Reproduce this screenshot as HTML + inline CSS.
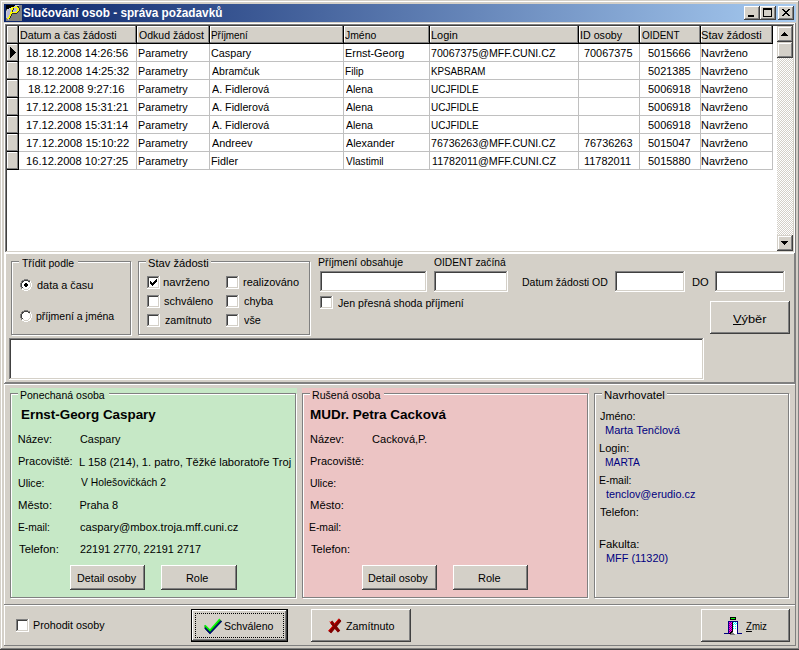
<!DOCTYPE html><html><head><meta charset="utf-8"><style>
html,body{margin:0;padding:0;width:799px;height:650px;overflow:hidden;background:#d4d0c8}
div,span,svg{position:absolute;box-sizing:border-box}
.t{white-space:pre;font-family:"Liberation Sans",sans-serif;line-height:13px}
u{text-decoration:underline;text-underline-offset:1px}
</style></head><body>
<div style="left:0px;top:0px;width:800px;height:650px;background:#d4d0c8;"></div>
<div style="left:1px;top:1px;width:798px;height:1px;background:#ffffff;"></div>
<div style="left:1px;top:1px;width:1px;height:648px;background:#ffffff;"></div>
<div style="left:798px;top:1px;width:1px;height:648px;background:#808080;"></div>
<div style="left:1px;top:648px;width:798px;height:1px;background:#808080;"></div>
<div style="left:0px;top:649px;width:800px;height:1px;background:#404040;"></div>
<div style="left:799px;top:0px;width:1px;height:650px;background:#404040;"></div>
<div style="left:4px;top:4px;width:792px;height:18px;background:linear-gradient(to right,#0a246a,#a6caf0);"></div>
<svg style="left:6px;top:5px" width="16" height="16" shape-rendering="crispEdges"><rect x="0" y="0" width="9" height="1" fill="#000"/><rect x="9" y="0" width="4" height="1" fill="#d0d0d0"/><rect x="13" y="0" width="3" height="1" fill="#808080"/><rect x="0" y="1" width="8" height="1" fill="#000"/><rect x="8" y="1" width="2" height="1" fill="#b8b8d8"/><rect x="10" y="1" width="1" height="1" fill="#ffff00"/><rect x="11" y="1" width="2" height="1" fill="#303030"/><rect x="13" y="1" width="3" height="1" fill="#808080"/><rect x="0" y="2" width="5" height="1" fill="#000"/><rect x="5" y="2" width="1" height="1" fill="#b8b8d8"/><rect x="6" y="2" width="6" height="1" fill="#ffff00"/><rect x="12" y="2" width="1" height="1" fill="#303030"/><rect x="13" y="2" width="3" height="1" fill="#808080"/><rect x="0" y="3" width="3" height="1" fill="#000"/><rect x="3" y="3" width="1" height="1" fill="#d0d0d0"/><rect x="4" y="3" width="3" height="1" fill="#ffff00"/><rect x="7" y="3" width="1" height="1" fill="#303030"/><rect x="8" y="3" width="3" height="1" fill="#b8b8d8"/><rect x="11" y="3" width="2" height="1" fill="#ffff00"/><rect x="13" y="3" width="1" height="1" fill="#303030"/><rect x="14" y="3" width="2" height="1" fill="#808080"/><rect x="0" y="4" width="1" height="1" fill="#303030"/><rect x="1" y="4" width="1" height="1" fill="#d0d0d0"/><rect x="2" y="4" width="3" height="1" fill="#b8b8d8"/><rect x="5" y="4" width="2" height="1" fill="#ffff00"/><rect x="7" y="4" width="1" height="1" fill="#303030"/><rect x="8" y="4" width="3" height="1" fill="#b8b8d8"/><rect x="11" y="4" width="2" height="1" fill="#ffff00"/><rect x="13" y="4" width="1" height="1" fill="#303030"/><rect x="14" y="4" width="2" height="1" fill="#808080"/><rect x="0" y="5" width="1" height="1" fill="#808080"/><rect x="1" y="5" width="1" height="1" fill="#d0d0d0"/><rect x="2" y="5" width="3" height="1" fill="#b8b8d8"/><rect x="5" y="5" width="1" height="1" fill="#ffff00"/><rect x="6" y="5" width="1" height="1" fill="#303030"/><rect x="7" y="5" width="4" height="1" fill="#b8b8d8"/><rect x="11" y="5" width="2" height="1" fill="#ffff00"/><rect x="13" y="5" width="1" height="1" fill="#303030"/><rect x="14" y="5" width="2" height="1" fill="#808080"/><rect x="0" y="6" width="1" height="1" fill="#d0d0d0"/><rect x="1" y="6" width="4" height="1" fill="#b8b8d8"/><rect x="5" y="6" width="1" height="1" fill="#ffff00"/><rect x="6" y="6" width="1" height="1" fill="#303030"/><rect x="7" y="6" width="3" height="1" fill="#b8b8d8"/><rect x="10" y="6" width="2" height="1" fill="#ffff00"/><rect x="12" y="6" width="1" height="1" fill="#303030"/><rect x="13" y="6" width="3" height="1" fill="#808080"/><rect x="0" y="7" width="1" height="1" fill="#d0d0d0"/><rect x="1" y="7" width="3" height="1" fill="#b8b8d8"/><rect x="4" y="7" width="7" height="1" fill="#ffff00"/><rect x="11" y="7" width="1" height="1" fill="#303030"/><rect x="12" y="7" width="4" height="1" fill="#808080"/><rect x="0" y="8" width="1" height="1" fill="#d0d0d0"/><rect x="1" y="8" width="3" height="1" fill="#b8b8d8"/><rect x="4" y="8" width="2" height="1" fill="#ffff00"/><rect x="6" y="8" width="5" height="1" fill="#303030"/><rect x="11" y="8" width="5" height="1" fill="#808080"/><rect x="0" y="9" width="1" height="1" fill="#d0d0d0"/><rect x="1" y="9" width="3" height="1" fill="#b8b8d8"/><rect x="4" y="9" width="1" height="1" fill="#ffff00"/><rect x="5" y="9" width="1" height="1" fill="#303030"/><rect x="6" y="9" width="10" height="1" fill="#808080"/><rect x="0" y="10" width="1" height="1" fill="#d0d0d0"/><rect x="1" y="10" width="2" height="1" fill="#b8b8d8"/><rect x="3" y="10" width="2" height="1" fill="#ffff00"/><rect x="5" y="10" width="1" height="1" fill="#303030"/><rect x="6" y="10" width="10" height="1" fill="#808080"/><rect x="0" y="11" width="1" height="1" fill="#d0d0d0"/><rect x="1" y="11" width="2" height="1" fill="#b8b8d8"/><rect x="3" y="11" width="1" height="1" fill="#ffff00"/><rect x="4" y="11" width="1" height="1" fill="#303030"/><rect x="5" y="11" width="11" height="1" fill="#808080"/><rect x="0" y="12" width="1" height="1" fill="#d0d0d0"/><rect x="1" y="12" width="1" height="1" fill="#b8b8d8"/><rect x="2" y="12" width="2" height="1" fill="#ffff00"/><rect x="4" y="12" width="1" height="1" fill="#303030"/><rect x="5" y="12" width="11" height="1" fill="#808080"/><rect x="0" y="13" width="1" height="1" fill="#808080"/><rect x="1" y="13" width="2" height="1" fill="#ffff00"/><rect x="3" y="13" width="1" height="1" fill="#303030"/><rect x="4" y="13" width="12" height="1" fill="#808080"/><rect x="0" y="14" width="2" height="1" fill="#808080"/><rect x="2" y="14" width="1" height="1" fill="#b8b8d8"/><rect x="3" y="14" width="13" height="1" fill="#808080"/><rect x="0" y="15" width="16" height="1" fill="#808080"/></svg>
<span class="t" style="left:23.02px;top:7px;font-size:12px;font-weight:bold;color:#fff;transform:scaleX(0.9802);transform-origin:0 0;">Slučování osob - správa požadavků</span>
<div style="left:744px;top:6px;width:16px;height:14px;background:#d4d0c8;"></div>
<div style="left:744px;top:6px;width:15px;height:1px;background:#ffffff;"></div>
<div style="left:744px;top:6px;width:1px;height:13px;background:#ffffff;"></div>
<div style="left:744px;top:19px;width:16px;height:1px;background:#404040;"></div>
<div style="left:759px;top:6px;width:1px;height:14px;background:#404040;"></div>
<div style="left:745px;top:7px;width:13px;height:1px;background:#d4d0c8;"></div>
<div style="left:745px;top:7px;width:1px;height:11px;background:#d4d0c8;"></div>
<div style="left:745px;top:18px;width:14px;height:1px;background:#808080;"></div>
<div style="left:758px;top:7px;width:1px;height:12px;background:#808080;"></div>
<div style="left:760px;top:6px;width:16px;height:14px;background:#d4d0c8;"></div>
<div style="left:760px;top:6px;width:15px;height:1px;background:#ffffff;"></div>
<div style="left:760px;top:6px;width:1px;height:13px;background:#ffffff;"></div>
<div style="left:760px;top:19px;width:16px;height:1px;background:#404040;"></div>
<div style="left:775px;top:6px;width:1px;height:14px;background:#404040;"></div>
<div style="left:761px;top:7px;width:13px;height:1px;background:#d4d0c8;"></div>
<div style="left:761px;top:7px;width:1px;height:11px;background:#d4d0c8;"></div>
<div style="left:761px;top:18px;width:14px;height:1px;background:#808080;"></div>
<div style="left:774px;top:7px;width:1px;height:12px;background:#808080;"></div>
<div style="left:778px;top:6px;width:16px;height:14px;background:#d4d0c8;"></div>
<div style="left:778px;top:6px;width:15px;height:1px;background:#ffffff;"></div>
<div style="left:778px;top:6px;width:1px;height:13px;background:#ffffff;"></div>
<div style="left:778px;top:19px;width:16px;height:1px;background:#404040;"></div>
<div style="left:793px;top:6px;width:1px;height:14px;background:#404040;"></div>
<div style="left:779px;top:7px;width:13px;height:1px;background:#d4d0c8;"></div>
<div style="left:779px;top:7px;width:1px;height:11px;background:#d4d0c8;"></div>
<div style="left:779px;top:18px;width:14px;height:1px;background:#808080;"></div>
<div style="left:792px;top:7px;width:1px;height:12px;background:#808080;"></div>
<div style="left:748px;top:15px;width:6px;height:2px;background:#000;"></div>
<div style="left:763px;top:8px;width:9px;height:2px;background:#000;"></div>
<div style="left:763px;top:8px;width:1px;height:9px;background:#000;"></div>
<div style="left:771px;top:8px;width:1px;height:9px;background:#000;"></div>
<div style="left:763px;top:16px;width:9px;height:1px;background:#000;"></div>
<svg style="left:782px;top:9px" width="8" height="7" shape-rendering="crispEdges"><path d="M0 0h2v1h1v1h2v-1h1v-1h2v1h-1v1h-1v1h-1v1h1v1h1v1h1v1h-2v-1h-1v-1h-2v1h-1v1h-2v-1h1v-1h1v-1h1v-1h-1v-1h-1v-1h-1z" fill="#000"/></svg>
<div style="left:4px;top:23px;width:792px;height:361px;background:#d4d0c8;"></div>
<div style="left:4px;top:23px;width:791px;height:1px;background:#ffffff;"></div>
<div style="left:4px;top:23px;width:1px;height:360px;background:#ffffff;"></div>
<div style="left:4px;top:383px;width:792px;height:1px;background:#808080;"></div>
<div style="left:795px;top:23px;width:1px;height:361px;background:#808080;"></div>
<div style="left:5px;top:24px;width:790px;height:229px;background:#fff;"></div>
<div style="left:5px;top:24px;width:789px;height:1px;background:#808080;"></div>
<div style="left:5px;top:24px;width:1px;height:228px;background:#808080;"></div>
<div style="left:5px;top:252px;width:790px;height:1px;background:#ffffff;"></div>
<div style="left:794px;top:24px;width:1px;height:229px;background:#ffffff;"></div>
<div style="left:6px;top:25px;width:787px;height:1px;background:#404040;"></div>
<div style="left:6px;top:25px;width:1px;height:226px;background:#404040;"></div>
<div style="left:6px;top:251px;width:788px;height:1px;background:#d4d0c8;"></div>
<div style="left:793px;top:25px;width:1px;height:227px;background:#d4d0c8;"></div>
<div style="left:7px;top:43px;width:766px;height:1px;background:#000;"></div>
<div style="left:18px;top:26px;width:1px;height:18px;background:#000;"></div>
<div style="left:7px;top:26px;width:11px;height:17px;background:#d4d0c8;"></div>
<div style="left:7px;top:26px;width:10px;height:1px;background:#ffffff;"></div>
<div style="left:7px;top:26px;width:1px;height:16px;background:#ffffff;"></div>
<div style="left:7px;top:42px;width:11px;height:1px;background:#808080;"></div>
<div style="left:17px;top:26px;width:1px;height:17px;background:#808080;"></div>
<div style="left:136px;top:26px;width:1px;height:18px;background:#000;"></div>
<div style="left:19px;top:26px;width:117px;height:17px;background:#d4d0c8;"></div>
<div style="left:19px;top:26px;width:116px;height:1px;background:#ffffff;"></div>
<div style="left:19px;top:26px;width:1px;height:16px;background:#ffffff;"></div>
<div style="left:19px;top:42px;width:117px;height:1px;background:#808080;"></div>
<div style="left:135px;top:26px;width:1px;height:17px;background:#808080;"></div>
<span class="t" style="left:20.03px;top:29px;font-size:11px;font-weight:normal;color:#000;transform:scaleX(0.9694);transform-origin:0 0;">Datum a čas žádosti</span>
<div style="left:209px;top:26px;width:1px;height:18px;background:#000;"></div>
<div style="left:137px;top:26px;width:72px;height:17px;background:#d4d0c8;"></div>
<div style="left:137px;top:26px;width:71px;height:1px;background:#ffffff;"></div>
<div style="left:137px;top:26px;width:1px;height:16px;background:#ffffff;"></div>
<div style="left:137px;top:42px;width:72px;height:1px;background:#808080;"></div>
<div style="left:208px;top:26px;width:1px;height:17px;background:#808080;"></div>
<span class="t" style="left:138.75px;top:29px;font-size:11px;font-weight:normal;color:#000;transform:scaleX(0.9559);transform-origin:0 0;">Odkud žádost</span>
<div style="left:343px;top:26px;width:1px;height:18px;background:#000;"></div>
<div style="left:210px;top:26px;width:133px;height:17px;background:#d4d0c8;"></div>
<div style="left:210px;top:26px;width:132px;height:1px;background:#ffffff;"></div>
<div style="left:210px;top:26px;width:1px;height:16px;background:#ffffff;"></div>
<div style="left:210px;top:42px;width:133px;height:1px;background:#808080;"></div>
<div style="left:342px;top:26px;width:1px;height:17px;background:#808080;"></div>
<span class="t" style="left:211.10px;top:29px;font-size:11px;font-weight:normal;color:#000;transform:scaleX(0.9000);transform-origin:0 0;">Příjmení</span>
<div style="left:429px;top:26px;width:1px;height:18px;background:#000;"></div>
<div style="left:344px;top:26px;width:85px;height:17px;background:#d4d0c8;"></div>
<div style="left:344px;top:26px;width:84px;height:1px;background:#ffffff;"></div>
<div style="left:344px;top:26px;width:1px;height:16px;background:#ffffff;"></div>
<div style="left:344px;top:42px;width:85px;height:1px;background:#808080;"></div>
<div style="left:428px;top:26px;width:1px;height:17px;background:#808080;"></div>
<span class="t" style="left:345.40px;top:29px;font-size:11px;font-weight:normal;color:#000;transform:scaleX(0.9455);transform-origin:0 0;">Jméno</span>
<div style="left:578px;top:26px;width:1px;height:18px;background:#000;"></div>
<div style="left:430px;top:26px;width:148px;height:17px;background:#d4d0c8;"></div>
<div style="left:430px;top:26px;width:147px;height:1px;background:#ffffff;"></div>
<div style="left:430px;top:26px;width:1px;height:16px;background:#ffffff;"></div>
<div style="left:430px;top:42px;width:148px;height:1px;background:#808080;"></div>
<div style="left:577px;top:26px;width:1px;height:17px;background:#808080;"></div>
<span class="t" style="left:430.60px;top:29px;font-size:11px;font-weight:normal;color:#000;transform:scaleX(0.9960);transform-origin:0 0;">Login</span>
<div style="left:639px;top:26px;width:1px;height:18px;background:#000;"></div>
<div style="left:579px;top:26px;width:60px;height:17px;background:#d4d0c8;"></div>
<div style="left:579px;top:26px;width:59px;height:1px;background:#ffffff;"></div>
<div style="left:579px;top:26px;width:1px;height:16px;background:#ffffff;"></div>
<div style="left:579px;top:42px;width:60px;height:1px;background:#808080;"></div>
<div style="left:638px;top:26px;width:1px;height:17px;background:#808080;"></div>
<span class="t" style="left:580.03px;top:29px;font-size:11px;font-weight:normal;color:#000;transform:scaleX(0.9709);transform-origin:0 0;">ID osoby</span>
<div style="left:700px;top:26px;width:1px;height:18px;background:#000;"></div>
<div style="left:640px;top:26px;width:60px;height:17px;background:#d4d0c8;"></div>
<div style="left:640px;top:26px;width:59px;height:1px;background:#ffffff;"></div>
<div style="left:640px;top:26px;width:1px;height:16px;background:#ffffff;"></div>
<div style="left:640px;top:42px;width:60px;height:1px;background:#808080;"></div>
<div style="left:699px;top:26px;width:1px;height:17px;background:#808080;"></div>
<span class="t" style="left:641.50px;top:29px;font-size:11px;font-weight:normal;color:#000;transform:scaleX(0.9024);transform-origin:0 0;">OIDENT</span>
<div style="left:772px;top:26px;width:1px;height:18px;background:#000;"></div>
<div style="left:701px;top:26px;width:71px;height:17px;background:#d4d0c8;"></div>
<div style="left:701px;top:26px;width:70px;height:1px;background:#ffffff;"></div>
<div style="left:701px;top:26px;width:1px;height:16px;background:#ffffff;"></div>
<div style="left:701px;top:42px;width:71px;height:1px;background:#808080;"></div>
<div style="left:771px;top:26px;width:1px;height:17px;background:#808080;"></div>
<span class="t" style="left:701.24px;top:29px;font-size:11px;font-weight:normal;color:#000;transform:scaleX(1.0129);transform-origin:0 0;">Stav žádosti</span>
<div style="left:7px;top:44px;width:11px;height:17px;background:#d4d0c8;"></div>
<div style="left:7px;top:44px;width:10px;height:1px;background:#ffffff;"></div>
<div style="left:7px;top:44px;width:1px;height:16px;background:#ffffff;"></div>
<div style="left:7px;top:60px;width:11px;height:1px;background:#808080;"></div>
<div style="left:17px;top:44px;width:1px;height:17px;background:#808080;"></div>
<div style="left:18px;top:44px;width:1px;height:18px;background:#000;"></div>
<div style="left:7px;top:61px;width:12px;height:1px;background:#000;"></div>
<div style="left:19px;top:61px;width:754px;height:1px;background:#c0c0c0;"></div>
<div style="left:136px;top:44px;width:1px;height:18px;background:#c0c0c0;"></div>
<div style="left:209px;top:44px;width:1px;height:18px;background:#c0c0c0;"></div>
<div style="left:343px;top:44px;width:1px;height:18px;background:#c0c0c0;"></div>
<div style="left:429px;top:44px;width:1px;height:18px;background:#c0c0c0;"></div>
<div style="left:578px;top:44px;width:1px;height:18px;background:#c0c0c0;"></div>
<div style="left:639px;top:44px;width:1px;height:18px;background:#c0c0c0;"></div>
<div style="left:700px;top:44px;width:1px;height:18px;background:#c0c0c0;"></div>
<div style="left:772px;top:44px;width:1px;height:18px;background:#c0c0c0;"></div>
<span class="t" style="left:25.74px;top:47px;font-size:11px;font-weight:normal;color:#000;transform:scaleX(1.0125);transform-origin:0 0;">18.12.2008 14:26:56</span>
<span class="t" style="left:137.52px;top:47px;font-size:11px;font-weight:normal;color:#000;transform:scaleX(0.9800);transform-origin:0 0;">Parametry</span>
<span class="t" style="left:210.77px;top:47px;font-size:11px;font-weight:normal;color:#000;transform:scaleX(0.9812);transform-origin:0 0;">Caspary</span>
<span class="t" style="left:344.51px;top:47px;font-size:11px;font-weight:normal;color:#000;transform:scaleX(0.9914);transform-origin:0 0;">Ernst-Georg</span>
<span class="t" style="left:430.79px;top:47px;font-size:11px;font-weight:normal;color:#000;transform:scaleX(0.9629);transform-origin:0 0;">70067375@MFF.CUNI.CZ</span>
<span class="t" style="left:583.76px;top:47px;font-size:11px;font-weight:normal;color:#000;transform:scaleX(0.9896);transform-origin:0 0;">70067375</span>
<span class="t" style="left:647.51px;top:47px;font-size:11px;font-weight:normal;color:#000;transform:scaleX(0.9940);transform-origin:0 0;">5015666</span>
<span class="t" style="left:701.26px;top:47px;font-size:11px;font-weight:normal;color:#000;transform:scaleX(0.9946);transform-origin:0 0;">Navrženo</span>
<div style="left:7px;top:62px;width:11px;height:17px;background:#d4d0c8;"></div>
<div style="left:7px;top:62px;width:10px;height:1px;background:#ffffff;"></div>
<div style="left:7px;top:62px;width:1px;height:16px;background:#ffffff;"></div>
<div style="left:7px;top:78px;width:11px;height:1px;background:#808080;"></div>
<div style="left:17px;top:62px;width:1px;height:17px;background:#808080;"></div>
<div style="left:18px;top:62px;width:1px;height:18px;background:#000;"></div>
<div style="left:7px;top:79px;width:12px;height:1px;background:#000;"></div>
<div style="left:19px;top:79px;width:754px;height:1px;background:#c0c0c0;"></div>
<div style="left:136px;top:62px;width:1px;height:18px;background:#c0c0c0;"></div>
<div style="left:209px;top:62px;width:1px;height:18px;background:#c0c0c0;"></div>
<div style="left:343px;top:62px;width:1px;height:18px;background:#c0c0c0;"></div>
<div style="left:429px;top:62px;width:1px;height:18px;background:#c0c0c0;"></div>
<div style="left:578px;top:62px;width:1px;height:18px;background:#c0c0c0;"></div>
<div style="left:639px;top:62px;width:1px;height:18px;background:#c0c0c0;"></div>
<div style="left:700px;top:62px;width:1px;height:18px;background:#c0c0c0;"></div>
<div style="left:772px;top:62px;width:1px;height:18px;background:#c0c0c0;"></div>
<span class="t" style="left:25.73px;top:65px;font-size:11px;font-weight:normal;color:#000;transform:scaleX(1.0227);transform-origin:0 0;">18.12.2008 14:25:32</span>
<span class="t" style="left:137.52px;top:65px;font-size:11px;font-weight:normal;color:#000;transform:scaleX(0.9800);transform-origin:0 0;">Parametry</span>
<span class="t" style="left:211.75px;top:65px;font-size:11px;font-weight:normal;color:#000;transform:scaleX(0.9592);transform-origin:0 0;">Abramčuk</span>
<span class="t" style="left:344.58px;top:65px;font-size:11px;font-weight:normal;color:#000;transform:scaleX(0.9211);transform-origin:0 0;">Filip</span>
<span class="t" style="left:430.86px;top:65px;font-size:11px;font-weight:normal;color:#000;transform:scaleX(0.8898);transform-origin:0 0;">KPSABRAM</span>
<span class="t" style="left:647.51px;top:65px;font-size:11px;font-weight:normal;color:#000;transform:scaleX(0.9940);transform-origin:0 0;">5021385</span>
<span class="t" style="left:701.26px;top:65px;font-size:11px;font-weight:normal;color:#000;transform:scaleX(0.9946);transform-origin:0 0;">Navrženo</span>
<div style="left:7px;top:80px;width:11px;height:17px;background:#d4d0c8;"></div>
<div style="left:7px;top:80px;width:10px;height:1px;background:#ffffff;"></div>
<div style="left:7px;top:80px;width:1px;height:16px;background:#ffffff;"></div>
<div style="left:7px;top:96px;width:11px;height:1px;background:#808080;"></div>
<div style="left:17px;top:80px;width:1px;height:17px;background:#808080;"></div>
<div style="left:18px;top:80px;width:1px;height:18px;background:#000;"></div>
<div style="left:7px;top:97px;width:12px;height:1px;background:#000;"></div>
<div style="left:19px;top:97px;width:754px;height:1px;background:#c0c0c0;"></div>
<div style="left:136px;top:80px;width:1px;height:18px;background:#c0c0c0;"></div>
<div style="left:209px;top:80px;width:1px;height:18px;background:#c0c0c0;"></div>
<div style="left:343px;top:80px;width:1px;height:18px;background:#c0c0c0;"></div>
<div style="left:429px;top:80px;width:1px;height:18px;background:#c0c0c0;"></div>
<div style="left:578px;top:80px;width:1px;height:18px;background:#c0c0c0;"></div>
<div style="left:639px;top:80px;width:1px;height:18px;background:#c0c0c0;"></div>
<div style="left:700px;top:80px;width:1px;height:18px;background:#c0c0c0;"></div>
<div style="left:772px;top:80px;width:1px;height:18px;background:#c0c0c0;"></div>
<span class="t" style="left:28.23px;top:83px;font-size:11px;font-weight:normal;color:#000;transform:scaleX(1.0186);transform-origin:0 0;">18.12.2008 9:27:16</span>
<span class="t" style="left:137.52px;top:83px;font-size:11px;font-weight:normal;color:#000;transform:scaleX(0.9800);transform-origin:0 0;">Parametry</span>
<span class="t" style="left:211.75px;top:83px;font-size:11px;font-weight:normal;color:#000;transform:scaleX(0.9746);transform-origin:0 0;">A. Fidlerová</span>
<span class="t" style="left:345.50px;top:83px;font-size:11px;font-weight:normal;color:#000;transform:scaleX(0.9554);transform-origin:0 0;">Alena</span>
<span class="t" style="left:430.84px;top:83px;font-size:11px;font-weight:normal;color:#000;transform:scaleX(0.9069);transform-origin:0 0;">UCJFIDLE</span>
<span class="t" style="left:647.51px;top:83px;font-size:11px;font-weight:normal;color:#000;transform:scaleX(0.9940);transform-origin:0 0;">5006918</span>
<span class="t" style="left:701.26px;top:83px;font-size:11px;font-weight:normal;color:#000;transform:scaleX(0.9946);transform-origin:0 0;">Navrženo</span>
<div style="left:7px;top:98px;width:11px;height:17px;background:#d4d0c8;"></div>
<div style="left:7px;top:98px;width:10px;height:1px;background:#ffffff;"></div>
<div style="left:7px;top:98px;width:1px;height:16px;background:#ffffff;"></div>
<div style="left:7px;top:114px;width:11px;height:1px;background:#808080;"></div>
<div style="left:17px;top:98px;width:1px;height:17px;background:#808080;"></div>
<div style="left:18px;top:98px;width:1px;height:18px;background:#000;"></div>
<div style="left:7px;top:115px;width:12px;height:1px;background:#000;"></div>
<div style="left:19px;top:115px;width:754px;height:1px;background:#c0c0c0;"></div>
<div style="left:136px;top:98px;width:1px;height:18px;background:#c0c0c0;"></div>
<div style="left:209px;top:98px;width:1px;height:18px;background:#c0c0c0;"></div>
<div style="left:343px;top:98px;width:1px;height:18px;background:#c0c0c0;"></div>
<div style="left:429px;top:98px;width:1px;height:18px;background:#c0c0c0;"></div>
<div style="left:578px;top:98px;width:1px;height:18px;background:#c0c0c0;"></div>
<div style="left:639px;top:98px;width:1px;height:18px;background:#c0c0c0;"></div>
<div style="left:700px;top:98px;width:1px;height:18px;background:#c0c0c0;"></div>
<div style="left:772px;top:98px;width:1px;height:18px;background:#c0c0c0;"></div>
<span class="t" style="left:25.73px;top:101px;font-size:11px;font-weight:normal;color:#000;transform:scaleX(1.0152);transform-origin:0 0;">17.12.2008 15:31:21</span>
<span class="t" style="left:137.52px;top:101px;font-size:11px;font-weight:normal;color:#000;transform:scaleX(0.9800);transform-origin:0 0;">Parametry</span>
<span class="t" style="left:211.75px;top:101px;font-size:11px;font-weight:normal;color:#000;transform:scaleX(0.9746);transform-origin:0 0;">A. Fidlerová</span>
<span class="t" style="left:345.50px;top:101px;font-size:11px;font-weight:normal;color:#000;transform:scaleX(0.9554);transform-origin:0 0;">Alena</span>
<span class="t" style="left:430.84px;top:101px;font-size:11px;font-weight:normal;color:#000;transform:scaleX(0.9069);transform-origin:0 0;">UCJFIDLE</span>
<span class="t" style="left:647.51px;top:101px;font-size:11px;font-weight:normal;color:#000;transform:scaleX(0.9940);transform-origin:0 0;">5006918</span>
<span class="t" style="left:701.26px;top:101px;font-size:11px;font-weight:normal;color:#000;transform:scaleX(0.9946);transform-origin:0 0;">Navrženo</span>
<div style="left:7px;top:116px;width:11px;height:17px;background:#d4d0c8;"></div>
<div style="left:7px;top:116px;width:10px;height:1px;background:#ffffff;"></div>
<div style="left:7px;top:116px;width:1px;height:16px;background:#ffffff;"></div>
<div style="left:7px;top:132px;width:11px;height:1px;background:#808080;"></div>
<div style="left:17px;top:116px;width:1px;height:17px;background:#808080;"></div>
<div style="left:18px;top:116px;width:1px;height:18px;background:#000;"></div>
<div style="left:7px;top:133px;width:12px;height:1px;background:#000;"></div>
<div style="left:19px;top:133px;width:754px;height:1px;background:#c0c0c0;"></div>
<div style="left:136px;top:116px;width:1px;height:18px;background:#c0c0c0;"></div>
<div style="left:209px;top:116px;width:1px;height:18px;background:#c0c0c0;"></div>
<div style="left:343px;top:116px;width:1px;height:18px;background:#c0c0c0;"></div>
<div style="left:429px;top:116px;width:1px;height:18px;background:#c0c0c0;"></div>
<div style="left:578px;top:116px;width:1px;height:18px;background:#c0c0c0;"></div>
<div style="left:639px;top:116px;width:1px;height:18px;background:#c0c0c0;"></div>
<div style="left:700px;top:116px;width:1px;height:18px;background:#c0c0c0;"></div>
<div style="left:772px;top:116px;width:1px;height:18px;background:#c0c0c0;"></div>
<span class="t" style="left:25.74px;top:119px;font-size:11px;font-weight:normal;color:#000;transform:scaleX(1.0125);transform-origin:0 0;">17.12.2008 15:31:14</span>
<span class="t" style="left:137.52px;top:119px;font-size:11px;font-weight:normal;color:#000;transform:scaleX(0.9800);transform-origin:0 0;">Parametry</span>
<span class="t" style="left:211.75px;top:119px;font-size:11px;font-weight:normal;color:#000;transform:scaleX(0.9746);transform-origin:0 0;">A. Fidlerová</span>
<span class="t" style="left:345.50px;top:119px;font-size:11px;font-weight:normal;color:#000;transform:scaleX(0.9554);transform-origin:0 0;">Alena</span>
<span class="t" style="left:430.84px;top:119px;font-size:11px;font-weight:normal;color:#000;transform:scaleX(0.9069);transform-origin:0 0;">UCJFIDLE</span>
<span class="t" style="left:647.51px;top:119px;font-size:11px;font-weight:normal;color:#000;transform:scaleX(0.9940);transform-origin:0 0;">5006918</span>
<span class="t" style="left:701.26px;top:119px;font-size:11px;font-weight:normal;color:#000;transform:scaleX(0.9946);transform-origin:0 0;">Navrženo</span>
<div style="left:7px;top:134px;width:11px;height:17px;background:#d4d0c8;"></div>
<div style="left:7px;top:134px;width:10px;height:1px;background:#ffffff;"></div>
<div style="left:7px;top:134px;width:1px;height:16px;background:#ffffff;"></div>
<div style="left:7px;top:150px;width:11px;height:1px;background:#808080;"></div>
<div style="left:17px;top:134px;width:1px;height:17px;background:#808080;"></div>
<div style="left:18px;top:134px;width:1px;height:18px;background:#000;"></div>
<div style="left:7px;top:151px;width:12px;height:1px;background:#000;"></div>
<div style="left:19px;top:151px;width:754px;height:1px;background:#c0c0c0;"></div>
<div style="left:136px;top:134px;width:1px;height:18px;background:#c0c0c0;"></div>
<div style="left:209px;top:134px;width:1px;height:18px;background:#c0c0c0;"></div>
<div style="left:343px;top:134px;width:1px;height:18px;background:#c0c0c0;"></div>
<div style="left:429px;top:134px;width:1px;height:18px;background:#c0c0c0;"></div>
<div style="left:578px;top:134px;width:1px;height:18px;background:#c0c0c0;"></div>
<div style="left:639px;top:134px;width:1px;height:18px;background:#c0c0c0;"></div>
<div style="left:700px;top:134px;width:1px;height:18px;background:#c0c0c0;"></div>
<div style="left:772px;top:134px;width:1px;height:18px;background:#c0c0c0;"></div>
<span class="t" style="left:25.73px;top:137px;font-size:11px;font-weight:normal;color:#000;transform:scaleX(1.0227);transform-origin:0 0;">17.12.2008 15:10:22</span>
<span class="t" style="left:137.52px;top:137px;font-size:11px;font-weight:normal;color:#000;transform:scaleX(0.9800);transform-origin:0 0;">Parametry</span>
<span class="t" style="left:211.75px;top:137px;font-size:11px;font-weight:normal;color:#000;transform:scaleX(0.9878);transform-origin:0 0;">Andreev</span>
<span class="t" style="left:345.50px;top:137px;font-size:11px;font-weight:normal;color:#000;transform:scaleX(0.9796);transform-origin:0 0;">Alexander</span>
<span class="t" style="left:430.79px;top:137px;font-size:11px;font-weight:normal;color:#000;transform:scaleX(0.9629);transform-origin:0 0;">76736263@MFF.CUNI.CZ</span>
<span class="t" style="left:583.76px;top:137px;font-size:11px;font-weight:normal;color:#000;transform:scaleX(0.9896);transform-origin:0 0;">76736263</span>
<span class="t" style="left:647.51px;top:137px;font-size:11px;font-weight:normal;color:#000;transform:scaleX(0.9940);transform-origin:0 0;">5015047</span>
<span class="t" style="left:701.26px;top:137px;font-size:11px;font-weight:normal;color:#000;transform:scaleX(0.9946);transform-origin:0 0;">Navrženo</span>
<div style="left:7px;top:152px;width:11px;height:17px;background:#d4d0c8;"></div>
<div style="left:7px;top:152px;width:10px;height:1px;background:#ffffff;"></div>
<div style="left:7px;top:152px;width:1px;height:16px;background:#ffffff;"></div>
<div style="left:7px;top:168px;width:11px;height:1px;background:#808080;"></div>
<div style="left:17px;top:152px;width:1px;height:17px;background:#808080;"></div>
<div style="left:18px;top:152px;width:1px;height:18px;background:#000;"></div>
<div style="left:7px;top:169px;width:12px;height:1px;background:#000;"></div>
<div style="left:19px;top:169px;width:754px;height:1px;background:#c0c0c0;"></div>
<div style="left:136px;top:152px;width:1px;height:18px;background:#c0c0c0;"></div>
<div style="left:209px;top:152px;width:1px;height:18px;background:#c0c0c0;"></div>
<div style="left:343px;top:152px;width:1px;height:18px;background:#c0c0c0;"></div>
<div style="left:429px;top:152px;width:1px;height:18px;background:#c0c0c0;"></div>
<div style="left:578px;top:152px;width:1px;height:18px;background:#c0c0c0;"></div>
<div style="left:639px;top:152px;width:1px;height:18px;background:#c0c0c0;"></div>
<div style="left:700px;top:152px;width:1px;height:18px;background:#c0c0c0;"></div>
<div style="left:772px;top:152px;width:1px;height:18px;background:#c0c0c0;"></div>
<span class="t" style="left:25.74px;top:155px;font-size:11px;font-weight:normal;color:#000;transform:scaleX(1.0125);transform-origin:0 0;">16.12.2008 10:27:25</span>
<span class="t" style="left:137.52px;top:155px;font-size:11px;font-weight:normal;color:#000;transform:scaleX(0.9800);transform-origin:0 0;">Parametry</span>
<span class="t" style="left:210.77px;top:155px;font-size:11px;font-weight:normal;color:#000;transform:scaleX(0.9808);transform-origin:0 0;">Fidler</span>
<span class="t" style="left:345.50px;top:155px;font-size:11px;font-weight:normal;color:#000;transform:scaleX(0.9187);transform-origin:0 0;">Vlastimil</span>
<span class="t" style="left:431.53px;top:155px;font-size:11px;font-weight:normal;color:#000;transform:scaleX(0.9722);transform-origin:0 0;">11782011@MFF.CUNI.CZ</span>
<span class="t" style="left:584.26px;top:155px;font-size:11px;font-weight:normal;color:#000;transform:scaleX(0.9946);transform-origin:0 0;">11782011</span>
<span class="t" style="left:647.51px;top:155px;font-size:11px;font-weight:normal;color:#000;transform:scaleX(0.9940);transform-origin:0 0;">5015880</span>
<span class="t" style="left:701.26px;top:155px;font-size:11px;font-weight:normal;color:#000;transform:scaleX(0.9946);transform-origin:0 0;">Navrženo</span>
<svg style="left:10px;top:47px" width="6" height="11" shape-rendering="crispEdges"><path d="M0 0h1v1h1v1h1v1h1v1h1v1h1v1h-1v1h-1v1h-1v1h-1v1h-1v1h-1z" fill="#000"/></svg>
<svg style="left:777px;top:42px" width="16" height="193" shape-rendering="crispEdges"><defs><pattern id="ck" width="2" height="2" patternUnits="userSpaceOnUse"><rect width="2" height="2" fill="#fff"/><rect width="1" height="1" fill="#d4d0c8"/><rect x="1" y="1" width="1" height="1" fill="#d4d0c8"/></pattern></defs><rect width="16" height="193" fill="url(#ck)"/></svg>
<div style="left:777px;top:26px;width:16px;height:16px;background:#d4d0c8;"></div>
<div style="left:777px;top:26px;width:15px;height:1px;background:#d4d0c8;"></div>
<div style="left:777px;top:26px;width:1px;height:15px;background:#d4d0c8;"></div>
<div style="left:777px;top:41px;width:16px;height:1px;background:#404040;"></div>
<div style="left:792px;top:26px;width:1px;height:16px;background:#404040;"></div>
<div style="left:778px;top:27px;width:13px;height:1px;background:#ffffff;"></div>
<div style="left:778px;top:27px;width:1px;height:13px;background:#ffffff;"></div>
<div style="left:778px;top:40px;width:14px;height:1px;background:#808080;"></div>
<div style="left:791px;top:27px;width:1px;height:14px;background:#808080;"></div>
<div style="left:777px;top:42px;width:16px;height:16px;background:#d4d0c8;"></div>
<div style="left:777px;top:42px;width:15px;height:1px;background:#d4d0c8;"></div>
<div style="left:777px;top:42px;width:1px;height:15px;background:#d4d0c8;"></div>
<div style="left:777px;top:57px;width:16px;height:1px;background:#404040;"></div>
<div style="left:792px;top:42px;width:1px;height:16px;background:#404040;"></div>
<div style="left:778px;top:43px;width:13px;height:1px;background:#ffffff;"></div>
<div style="left:778px;top:43px;width:1px;height:13px;background:#ffffff;"></div>
<div style="left:778px;top:56px;width:14px;height:1px;background:#808080;"></div>
<div style="left:791px;top:43px;width:1px;height:14px;background:#808080;"></div>
<div style="left:777px;top:235px;width:16px;height:16px;background:#d4d0c8;"></div>
<div style="left:777px;top:235px;width:15px;height:1px;background:#d4d0c8;"></div>
<div style="left:777px;top:235px;width:1px;height:15px;background:#d4d0c8;"></div>
<div style="left:777px;top:250px;width:16px;height:1px;background:#404040;"></div>
<div style="left:792px;top:235px;width:1px;height:16px;background:#404040;"></div>
<div style="left:778px;top:236px;width:13px;height:1px;background:#ffffff;"></div>
<div style="left:778px;top:236px;width:1px;height:13px;background:#ffffff;"></div>
<div style="left:778px;top:249px;width:14px;height:1px;background:#808080;"></div>
<div style="left:791px;top:236px;width:1px;height:14px;background:#808080;"></div>
<svg style="left:781px;top:32px" width="7" height="4" shape-rendering="crispEdges"><path d="M3 0h1v1h1v1h1v1h1v1h-7v-1h1v-1h1v-1h1z" fill="#000"/></svg>
<svg style="left:781px;top:241px" width="7" height="4" shape-rendering="crispEdges"><path d="M0 0h7v1h-1v1h-1v1h-1v1h-1v-1h-1v-1h-1v-1h-1z" fill="#000"/></svg>
<div style="left:5px;top:253px;width:790px;height:130px;background:#d4d0c8;"></div>
<div style="left:5px;top:253px;width:789px;height:1px;background:#ffffff;"></div>
<div style="left:5px;top:253px;width:1px;height:129px;background:#ffffff;"></div>
<div style="left:5px;top:382px;width:790px;height:1px;background:#808080;"></div>
<div style="left:794px;top:253px;width:1px;height:130px;background:#808080;"></div>
<div style="left:12px;top:262px;width:119px;height:1px;background:#ffffff;"></div>
<div style="left:12px;top:262px;width:1px;height:73px;background:#ffffff;"></div>
<div style="left:12px;top:335px;width:120px;height:1px;background:#ffffff;"></div>
<div style="left:131px;top:262px;width:1px;height:74px;background:#ffffff;"></div>
<div style="left:11px;top:261px;width:119px;height:1px;background:#808080;"></div>
<div style="left:11px;top:261px;width:1px;height:73px;background:#808080;"></div>
<div style="left:11px;top:334px;width:120px;height:1px;background:#808080;"></div>
<div style="left:130px;top:261px;width:1px;height:74px;background:#808080;"></div>
<div style="left:19px;top:261px;width:59px;height:2px;background:#d4d0c8;"></div>
<span class="t" style="left:22.00px;top:257px;font-size:11px;font-weight:normal;color:#000;transform:scaleX(0.9455);transform-origin:0 0;">Třídit podle</span>
<div style="left:139px;top:262px;width:171px;height:1px;background:#ffffff;"></div>
<div style="left:139px;top:262px;width:1px;height:73px;background:#ffffff;"></div>
<div style="left:139px;top:335px;width:172px;height:1px;background:#ffffff;"></div>
<div style="left:310px;top:262px;width:1px;height:74px;background:#ffffff;"></div>
<div style="left:138px;top:261px;width:171px;height:1px;background:#808080;"></div>
<div style="left:138px;top:261px;width:1px;height:73px;background:#808080;"></div>
<div style="left:138px;top:334px;width:172px;height:1px;background:#808080;"></div>
<div style="left:309px;top:261px;width:1px;height:74px;background:#808080;"></div>
<div style="left:146px;top:261px;width:65px;height:2px;background:#d4d0c8;"></div>
<span class="t" style="left:147.59px;top:257px;font-size:11px;font-weight:normal;color:#000;transform:scaleX(1.0138);transform-origin:0 0;">Stav žádosti</span>
<svg style="left:20px;top:279px" width="12" height="12" viewBox="0 0 12 12" shape-rendering="crispEdges">
<path d="M4 0h4v1h2v1h1v2h1v4h-1v2h-1v1h-2v1h-4v-1h-2v-1h-1v-2h-1v-4h1v-2h1v-1h2z" fill="#fff"/>
<path d="M4 0h4v1h-4zM2 1h2v1h-2zM8 1h2v1h-2zM1 2h1v2h-1zM0 4h1v4h-1zM1 8h1v2h-1z" fill="#808080"/>
<path d="M4 1h4v1h-4zM2 2h2v1h-2zM8 2h2v1h-2zM2 3h1v1h-1zM1 4h1v4h-1zM2 8h1v1h-1z" fill="#404040"/>
<path d="M10 2h1v2h-1zM11 4h1v4h-1zM10 8h1v2h-1zM8 10h2v1h-2zM4 11h4v1h-4zM2 10h2v1h-2z" fill="#fff"/>
<path d="M9 3h1v1h-1zM10 4h1v4h-1zM9 8h1v1h-1zM8 9h1v1h-1zM4 10h4v1h-4zM3 9h1v1h-1z" fill="#d4d0c8"/>
<path d="M5 4h2v1h1v2h-1v1h-2v-1h-1v-2h1z" fill="#000"/>
</svg>
<span class="t" style="left:37.00px;top:279px;font-size:11px;font-weight:normal;color:#000;transform:scaleX(0.9911);transform-origin:0 0;">data a času</span>
<svg style="left:20px;top:310px" width="12" height="12" viewBox="0 0 12 12" shape-rendering="crispEdges">
<path d="M4 0h4v1h2v1h1v2h1v4h-1v2h-1v1h-2v1h-4v-1h-2v-1h-1v-2h-1v-4h1v-2h1v-1h2z" fill="#fff"/>
<path d="M4 0h4v1h-4zM2 1h2v1h-2zM8 1h2v1h-2zM1 2h1v2h-1zM0 4h1v4h-1zM1 8h1v2h-1z" fill="#808080"/>
<path d="M4 1h4v1h-4zM2 2h2v1h-2zM8 2h2v1h-2zM2 3h1v1h-1zM1 4h1v4h-1zM2 8h1v1h-1z" fill="#404040"/>
<path d="M10 2h1v2h-1zM11 4h1v4h-1zM10 8h1v2h-1zM8 10h2v1h-2zM4 11h4v1h-4zM2 10h2v1h-2z" fill="#fff"/>
<path d="M9 3h1v1h-1zM10 4h1v4h-1zM9 8h1v1h-1zM8 9h1v1h-1zM4 10h4v1h-4zM3 9h1v1h-1z" fill="#d4d0c8"/>

</svg>
<span class="t" style="left:36.05px;top:310px;font-size:11px;font-weight:normal;color:#000;transform:scaleX(0.9543);transform-origin:0 0;">příjmení a jména</span>
<div style="left:147px;top:276px;width:13px;height:13px;background:#fff;"></div>
<div style="left:147px;top:276px;width:12px;height:1px;background:#808080;"></div>
<div style="left:147px;top:276px;width:1px;height:12px;background:#808080;"></div>
<div style="left:147px;top:288px;width:13px;height:1px;background:#ffffff;"></div>
<div style="left:159px;top:276px;width:1px;height:13px;background:#ffffff;"></div>
<div style="left:148px;top:277px;width:10px;height:1px;background:#404040;"></div>
<div style="left:148px;top:277px;width:1px;height:10px;background:#404040;"></div>
<div style="left:148px;top:287px;width:11px;height:1px;background:#d4d0c8;"></div>
<div style="left:158px;top:277px;width:1px;height:11px;background:#d4d0c8;"></div>
<svg style="left:150px;top:279px" width="7" height="7" shape-rendering="crispEdges"><path d="M0 2h1v1h1v1h1v-1h1v-1h1v-1h1v-1h1v3h-1v1h-1v1h-1v1h-1v1h-1v-1h-1v-1h-1v-1h-1z" fill="#000"/></svg>
<span class="t" style="left:163.47px;top:276px;font-size:11px;font-weight:normal;color:#000;transform:scaleX(1.0295);transform-origin:0 0;">navrženo</span>
<div style="left:147px;top:295px;width:13px;height:13px;background:#fff;"></div>
<div style="left:147px;top:295px;width:12px;height:1px;background:#808080;"></div>
<div style="left:147px;top:295px;width:1px;height:12px;background:#808080;"></div>
<div style="left:147px;top:307px;width:13px;height:1px;background:#ffffff;"></div>
<div style="left:159px;top:295px;width:1px;height:13px;background:#ffffff;"></div>
<div style="left:148px;top:296px;width:10px;height:1px;background:#404040;"></div>
<div style="left:148px;top:296px;width:1px;height:10px;background:#404040;"></div>
<div style="left:148px;top:306px;width:11px;height:1px;background:#d4d0c8;"></div>
<div style="left:158px;top:296px;width:1px;height:11px;background:#d4d0c8;"></div>
<span class="t" style="left:163.51px;top:295px;font-size:11px;font-weight:normal;color:#000;transform:scaleX(0.9917);transform-origin:0 0;">schváleno</span>
<div style="left:147px;top:314px;width:13px;height:13px;background:#fff;"></div>
<div style="left:147px;top:314px;width:12px;height:1px;background:#808080;"></div>
<div style="left:147px;top:314px;width:1px;height:12px;background:#808080;"></div>
<div style="left:147px;top:326px;width:13px;height:1px;background:#ffffff;"></div>
<div style="left:159px;top:314px;width:1px;height:13px;background:#ffffff;"></div>
<div style="left:148px;top:315px;width:10px;height:1px;background:#404040;"></div>
<div style="left:148px;top:315px;width:1px;height:10px;background:#404040;"></div>
<div style="left:148px;top:325px;width:11px;height:1px;background:#d4d0c8;"></div>
<div style="left:158px;top:315px;width:1px;height:11px;background:#d4d0c8;"></div>
<span class="t" style="left:164.50px;top:314px;font-size:11px;font-weight:normal;color:#000;transform:scaleX(0.9688);transform-origin:0 0;">zamítnuto</span>
<div style="left:226px;top:276px;width:13px;height:13px;background:#fff;"></div>
<div style="left:226px;top:276px;width:12px;height:1px;background:#808080;"></div>
<div style="left:226px;top:276px;width:1px;height:12px;background:#808080;"></div>
<div style="left:226px;top:288px;width:13px;height:1px;background:#ffffff;"></div>
<div style="left:238px;top:276px;width:1px;height:13px;background:#ffffff;"></div>
<div style="left:227px;top:277px;width:10px;height:1px;background:#404040;"></div>
<div style="left:227px;top:277px;width:1px;height:10px;background:#404040;"></div>
<div style="left:227px;top:287px;width:11px;height:1px;background:#d4d0c8;"></div>
<div style="left:237px;top:277px;width:1px;height:11px;background:#d4d0c8;"></div>
<span class="t" style="left:242.80px;top:276px;font-size:11px;font-weight:normal;color:#000;transform:scaleX(0.9964);transform-origin:0 0;">realizováno</span>
<div style="left:226px;top:295px;width:13px;height:13px;background:#fff;"></div>
<div style="left:226px;top:295px;width:12px;height:1px;background:#808080;"></div>
<div style="left:226px;top:295px;width:1px;height:12px;background:#808080;"></div>
<div style="left:226px;top:307px;width:13px;height:1px;background:#ffffff;"></div>
<div style="left:238px;top:295px;width:1px;height:13px;background:#ffffff;"></div>
<div style="left:227px;top:296px;width:10px;height:1px;background:#404040;"></div>
<div style="left:227px;top:296px;width:1px;height:10px;background:#404040;"></div>
<div style="left:227px;top:306px;width:11px;height:1px;background:#d4d0c8;"></div>
<div style="left:237px;top:296px;width:1px;height:11px;background:#d4d0c8;"></div>
<span class="t" style="left:243.80px;top:295px;font-size:11px;font-weight:normal;color:#000;transform:scaleX(0.9862);transform-origin:0 0;">chyba</span>
<div style="left:226px;top:314px;width:13px;height:13px;background:#fff;"></div>
<div style="left:226px;top:314px;width:12px;height:1px;background:#808080;"></div>
<div style="left:226px;top:314px;width:1px;height:12px;background:#808080;"></div>
<div style="left:226px;top:326px;width:13px;height:1px;background:#ffffff;"></div>
<div style="left:238px;top:314px;width:1px;height:13px;background:#ffffff;"></div>
<div style="left:227px;top:315px;width:10px;height:1px;background:#404040;"></div>
<div style="left:227px;top:315px;width:1px;height:10px;background:#404040;"></div>
<div style="left:227px;top:325px;width:11px;height:1px;background:#d4d0c8;"></div>
<div style="left:237px;top:315px;width:1px;height:11px;background:#d4d0c8;"></div>
<span class="t" style="left:243.80px;top:314px;font-size:11px;font-weight:normal;color:#000;transform:scaleX(0.9824);transform-origin:0 0;">vše</span>
<span class="t" style="left:318.44px;top:256px;font-size:11px;font-weight:normal;color:#000;transform:scaleX(0.9586);transform-origin:0 0;">Příjmení obsahuje</span>
<span class="t" style="left:433.60px;top:256px;font-size:11px;font-weight:normal;color:#000;transform:scaleX(0.9325);transform-origin:0 0;">OIDENT začíná</span>
<div style="left:320px;top:271px;width:107px;height:21px;background:#fff;"></div>
<div style="left:320px;top:271px;width:106px;height:1px;background:#808080;"></div>
<div style="left:320px;top:271px;width:1px;height:20px;background:#808080;"></div>
<div style="left:320px;top:291px;width:107px;height:1px;background:#ffffff;"></div>
<div style="left:426px;top:271px;width:1px;height:21px;background:#ffffff;"></div>
<div style="left:321px;top:272px;width:104px;height:1px;background:#404040;"></div>
<div style="left:321px;top:272px;width:1px;height:18px;background:#404040;"></div>
<div style="left:321px;top:290px;width:105px;height:1px;background:#d4d0c8;"></div>
<div style="left:425px;top:272px;width:1px;height:19px;background:#d4d0c8;"></div>
<div style="left:434px;top:271px;width:74px;height:21px;background:#fff;"></div>
<div style="left:434px;top:271px;width:73px;height:1px;background:#808080;"></div>
<div style="left:434px;top:271px;width:1px;height:20px;background:#808080;"></div>
<div style="left:434px;top:291px;width:74px;height:1px;background:#ffffff;"></div>
<div style="left:507px;top:271px;width:1px;height:21px;background:#ffffff;"></div>
<div style="left:435px;top:272px;width:71px;height:1px;background:#404040;"></div>
<div style="left:435px;top:272px;width:1px;height:18px;background:#404040;"></div>
<div style="left:435px;top:290px;width:72px;height:1px;background:#d4d0c8;"></div>
<div style="left:506px;top:272px;width:1px;height:19px;background:#d4d0c8;"></div>
<span class="t" style="left:522.04px;top:276px;font-size:11px;font-weight:normal;color:#000;transform:scaleX(0.9551);transform-origin:0 0;">Datum žádosti OD</span>
<div style="left:615px;top:271px;width:70px;height:21px;background:#fff;"></div>
<div style="left:615px;top:271px;width:69px;height:1px;background:#808080;"></div>
<div style="left:615px;top:271px;width:1px;height:20px;background:#808080;"></div>
<div style="left:615px;top:291px;width:70px;height:1px;background:#ffffff;"></div>
<div style="left:684px;top:271px;width:1px;height:21px;background:#ffffff;"></div>
<div style="left:616px;top:272px;width:67px;height:1px;background:#404040;"></div>
<div style="left:616px;top:272px;width:1px;height:18px;background:#404040;"></div>
<div style="left:616px;top:290px;width:68px;height:1px;background:#d4d0c8;"></div>
<div style="left:683px;top:272px;width:1px;height:19px;background:#d4d0c8;"></div>
<span class="t" style="left:692.49px;top:276px;font-size:11px;font-weight:normal;color:#000;transform:scaleX(1.0133);transform-origin:0 0;">DO</span>
<div style="left:715px;top:271px;width:70px;height:21px;background:#fff;"></div>
<div style="left:715px;top:271px;width:69px;height:1px;background:#808080;"></div>
<div style="left:715px;top:271px;width:1px;height:20px;background:#808080;"></div>
<div style="left:715px;top:291px;width:70px;height:1px;background:#ffffff;"></div>
<div style="left:784px;top:271px;width:1px;height:21px;background:#ffffff;"></div>
<div style="left:716px;top:272px;width:67px;height:1px;background:#404040;"></div>
<div style="left:716px;top:272px;width:1px;height:18px;background:#404040;"></div>
<div style="left:716px;top:290px;width:68px;height:1px;background:#d4d0c8;"></div>
<div style="left:783px;top:272px;width:1px;height:19px;background:#d4d0c8;"></div>
<div style="left:320px;top:296px;width:13px;height:13px;background:#fff;"></div>
<div style="left:320px;top:296px;width:12px;height:1px;background:#808080;"></div>
<div style="left:320px;top:296px;width:1px;height:12px;background:#808080;"></div>
<div style="left:320px;top:308px;width:13px;height:1px;background:#ffffff;"></div>
<div style="left:332px;top:296px;width:1px;height:13px;background:#ffffff;"></div>
<div style="left:321px;top:297px;width:10px;height:1px;background:#404040;"></div>
<div style="left:321px;top:297px;width:1px;height:10px;background:#404040;"></div>
<div style="left:321px;top:307px;width:11px;height:1px;background:#d4d0c8;"></div>
<div style="left:331px;top:297px;width:1px;height:11px;background:#d4d0c8;"></div>
<span class="t" style="left:337.80px;top:297px;font-size:11px;font-weight:normal;color:#000;transform:scaleX(0.9654);transform-origin:0 0;">Jen přesná shoda příjmení</span>
<div style="left:710px;top:301px;width:80px;height:33px;background:#d4d0c8;"></div>
<div style="left:710px;top:301px;width:79px;height:1px;background:#ffffff;"></div>
<div style="left:710px;top:301px;width:1px;height:32px;background:#ffffff;"></div>
<div style="left:710px;top:333px;width:80px;height:1px;background:#404040;"></div>
<div style="left:789px;top:301px;width:1px;height:33px;background:#404040;"></div>
<div style="left:711px;top:302px;width:77px;height:1px;background:#d4d0c8;"></div>
<div style="left:711px;top:302px;width:1px;height:30px;background:#d4d0c8;"></div>
<div style="left:711px;top:332px;width:78px;height:1px;background:#808080;"></div>
<div style="left:788px;top:302px;width:1px;height:31px;background:#808080;"></div>
<span class="t" style="left:733.00px;top:313px;font-size:11px;font-weight:normal;color:#000;transform:scaleX(1.1655);transform-origin:0 0;"><u>V</u>ýběr</span>
<div style="left:9px;top:338px;width:695px;height:42px;background:#fff;"></div>
<div style="left:9px;top:338px;width:694px;height:1px;background:#808080;"></div>
<div style="left:9px;top:338px;width:1px;height:41px;background:#808080;"></div>
<div style="left:9px;top:379px;width:695px;height:1px;background:#ffffff;"></div>
<div style="left:703px;top:338px;width:1px;height:42px;background:#ffffff;"></div>
<div style="left:10px;top:339px;width:692px;height:1px;background:#404040;"></div>
<div style="left:10px;top:339px;width:1px;height:39px;background:#404040;"></div>
<div style="left:10px;top:378px;width:693px;height:1px;background:#d4d0c8;"></div>
<div style="left:702px;top:339px;width:1px;height:40px;background:#d4d0c8;"></div>
<div style="left:4px;top:384px;width:792px;height:221px;background:#d4d0c8;"></div>
<div style="left:4px;top:384px;width:791px;height:1px;background:#ffffff;"></div>
<div style="left:4px;top:384px;width:1px;height:220px;background:#ffffff;"></div>
<div style="left:4px;top:604px;width:792px;height:1px;background:#808080;"></div>
<div style="left:795px;top:384px;width:1px;height:221px;background:#808080;"></div>
<div style="left:10px;top:388px;width:287px;height:211px;background:#c6e8c6;"></div>
<div style="left:302px;top:388px;width:287px;height:211px;background:#ecc4c4;"></div>
<div style="left:11px;top:394px;width:285px;height:1px;background:#ffffff;"></div>
<div style="left:11px;top:394px;width:1px;height:204px;background:#ffffff;"></div>
<div style="left:11px;top:598px;width:286px;height:1px;background:#ffffff;"></div>
<div style="left:296px;top:394px;width:1px;height:205px;background:#ffffff;"></div>
<div style="left:10px;top:393px;width:285px;height:1px;background:#808080;"></div>
<div style="left:10px;top:393px;width:1px;height:204px;background:#808080;"></div>
<div style="left:10px;top:597px;width:286px;height:1px;background:#808080;"></div>
<div style="left:295px;top:393px;width:1px;height:205px;background:#808080;"></div>
<div style="left:18px;top:393px;width:91px;height:2px;background:#c6e8c6;"></div>
<span class="t" style="left:20.05px;top:389px;font-size:11px;font-weight:normal;color:#000;transform:scaleX(0.9545);transform-origin:0 0;">Ponechaná osoba</span>
<div style="left:303px;top:394px;width:285px;height:1px;background:#ffffff;"></div>
<div style="left:303px;top:394px;width:1px;height:204px;background:#ffffff;"></div>
<div style="left:303px;top:598px;width:286px;height:1px;background:#ffffff;"></div>
<div style="left:588px;top:394px;width:1px;height:205px;background:#ffffff;"></div>
<div style="left:302px;top:393px;width:285px;height:1px;background:#808080;"></div>
<div style="left:302px;top:393px;width:1px;height:204px;background:#808080;"></div>
<div style="left:302px;top:597px;width:286px;height:1px;background:#808080;"></div>
<div style="left:587px;top:393px;width:1px;height:205px;background:#808080;"></div>
<div style="left:310px;top:393px;width:74px;height:2px;background:#ecc4c4;"></div>
<span class="t" style="left:311.54px;top:389px;font-size:11px;font-weight:normal;color:#000;transform:scaleX(0.9643);transform-origin:0 0;">Rušená osoba</span>
<div style="left:595px;top:394px;width:194px;height:1px;background:#ffffff;"></div>
<div style="left:595px;top:394px;width:1px;height:204px;background:#ffffff;"></div>
<div style="left:595px;top:598px;width:195px;height:1px;background:#ffffff;"></div>
<div style="left:789px;top:394px;width:1px;height:205px;background:#ffffff;"></div>
<div style="left:594px;top:393px;width:194px;height:1px;background:#808080;"></div>
<div style="left:594px;top:393px;width:1px;height:204px;background:#808080;"></div>
<div style="left:594px;top:597px;width:195px;height:1px;background:#808080;"></div>
<div style="left:788px;top:393px;width:1px;height:205px;background:#808080;"></div>
<div style="left:602px;top:393px;width:65px;height:2px;background:#d4d0c8;"></div>
<span class="t" style="left:603.76px;top:389px;font-size:11px;font-weight:normal;color:#000;transform:scaleX(1.0351);transform-origin:0 0;">Navrhovatel</span>
<span class="t" style="left:20.57px;top:408px;font-size:13px;font-weight:bold;color:#000;transform:scaleX(1.0308);transform-origin:0 0;">Ernst-Georg Caspary</span>
<span class="t" style="left:309.56px;top:408px;font-size:13px;font-weight:bold;color:#000;transform:scaleX(1.0392);transform-origin:0 0;">MUDr. Petra Cacková</span>
<span class="t" style="left:17.75px;top:433px;font-size:11px;font-weight:normal;color:#000;transform:scaleX(1.0000);transform-origin:0 0;">Název:</span>
<span class="t" style="left:79.51px;top:433px;font-size:11px;font-weight:normal;color:#000;transform:scaleX(0.9875);transform-origin:0 0;">Caspary</span>
<span class="t" style="left:309.71px;top:433px;font-size:11px;font-weight:normal;color:#000;transform:scaleX(0.9939);transform-origin:0 0;">Název:</span>
<span class="t" style="left:17.75px;top:455px;font-size:11px;font-weight:normal;color:#000;transform:scaleX(1.0047);transform-origin:0 0;">Pracoviště:</span>
<span class="t" style="left:78.99px;top:456px;font-size:11px;font-weight:normal;color:#000;transform:scaleX(1.0144);transform-origin:0 0;">L 158 (214), 1. patro, Těžké laboratoře Troj</span>
<span class="t" style="left:309.71px;top:455px;font-size:11px;font-weight:normal;color:#000;transform:scaleX(0.9943);transform-origin:0 0;">Pracoviště:</span>
<span class="t" style="left:17.79px;top:477px;font-size:11px;font-weight:normal;color:#000;transform:scaleX(0.9615);transform-origin:0 0;">Ulice:</span>
<span class="t" style="left:80.50px;top:476px;font-size:11px;font-weight:normal;color:#000;transform:scaleX(0.9389);transform-origin:0 0;">V Holešovičkách 2</span>
<span class="t" style="left:309.75px;top:477px;font-size:11px;font-weight:normal;color:#000;transform:scaleX(0.9500);transform-origin:0 0;">Ulice:</span>
<span class="t" style="left:17.72px;top:499px;font-size:11px;font-weight:normal;color:#000;transform:scaleX(1.0323);transform-origin:0 0;">Město:</span>
<span class="t" style="left:79.50px;top:499px;font-size:11px;font-weight:normal;color:#000;transform:scaleX(1.0000);transform-origin:0 0;">Praha 8</span>
<span class="t" style="left:309.67px;top:499px;font-size:11px;font-weight:normal;color:#000;transform:scaleX(1.0258);transform-origin:0 0;">Město:</span>
<span class="t" style="left:17.82px;top:521px;font-size:11px;font-weight:normal;color:#000;transform:scaleX(0.9318);transform-origin:0 0;">E-mail:</span>
<span class="t" style="left:80.00px;top:521px;font-size:11px;font-weight:normal;color:#000;transform:scaleX(1.0115);transform-origin:0 0;">caspary@mbox.troja.mff.cuni.cz</span>
<span class="t" style="left:308.56px;top:521px;font-size:11px;font-weight:normal;color:#000;transform:scaleX(0.9394);transform-origin:0 0;">E-mail:</span>
<span class="t" style="left:18.75px;top:543px;font-size:11px;font-weight:normal;color:#000;transform:scaleX(1.0329);transform-origin:0 0;">Telefon:</span>
<span class="t" style="left:80.00px;top:543px;font-size:11px;font-weight:normal;color:#000;transform:scaleX(0.9902);transform-origin:0 0;">22191 2770, 22191 2717</span>
<span class="t" style="left:311.10px;top:543px;font-size:11px;font-weight:normal;color:#000;transform:scaleX(1.0132);transform-origin:0 0;">Telefon:</span>
<span class="t" style="left:371.99px;top:433px;font-size:11px;font-weight:normal;color:#000;transform:scaleX(1.0057);transform-origin:0 0;">Cacková,P.</span>
<div style="left:70px;top:565px;width:75px;height:25px;background:#d4d0c8;"></div>
<div style="left:70px;top:565px;width:74px;height:1px;background:#ffffff;"></div>
<div style="left:70px;top:565px;width:1px;height:24px;background:#ffffff;"></div>
<div style="left:70px;top:589px;width:75px;height:1px;background:#404040;"></div>
<div style="left:144px;top:565px;width:1px;height:25px;background:#404040;"></div>
<div style="left:71px;top:566px;width:72px;height:1px;background:#d4d0c8;"></div>
<div style="left:71px;top:566px;width:1px;height:22px;background:#d4d0c8;"></div>
<div style="left:71px;top:588px;width:73px;height:1px;background:#808080;"></div>
<div style="left:143px;top:566px;width:1px;height:23px;background:#808080;"></div>
<span class="t" style="left:76.53px;top:572px;font-size:11px;font-weight:normal;color:#000;transform:scaleX(0.9750);transform-origin:0 0;">Detail osoby</span>
<div style="left:161px;top:565px;width:76px;height:25px;background:#d4d0c8;"></div>
<div style="left:161px;top:565px;width:75px;height:1px;background:#ffffff;"></div>
<div style="left:161px;top:565px;width:1px;height:24px;background:#ffffff;"></div>
<div style="left:161px;top:589px;width:76px;height:1px;background:#404040;"></div>
<div style="left:236px;top:565px;width:1px;height:25px;background:#404040;"></div>
<div style="left:162px;top:566px;width:73px;height:1px;background:#d4d0c8;"></div>
<div style="left:162px;top:566px;width:1px;height:22px;background:#d4d0c8;"></div>
<div style="left:162px;top:588px;width:74px;height:1px;background:#808080;"></div>
<div style="left:235px;top:566px;width:1px;height:23px;background:#808080;"></div>
<span class="t" style="left:186.41px;top:572px;font-size:11px;font-weight:normal;color:#000;transform:scaleX(0.9905);transform-origin:0 0;">Role</span>
<div style="left:362px;top:565px;width:75px;height:25px;background:#d4d0c8;"></div>
<div style="left:362px;top:565px;width:74px;height:1px;background:#ffffff;"></div>
<div style="left:362px;top:565px;width:1px;height:24px;background:#ffffff;"></div>
<div style="left:362px;top:589px;width:75px;height:1px;background:#404040;"></div>
<div style="left:436px;top:565px;width:1px;height:25px;background:#404040;"></div>
<div style="left:363px;top:566px;width:72px;height:1px;background:#d4d0c8;"></div>
<div style="left:363px;top:566px;width:1px;height:22px;background:#d4d0c8;"></div>
<div style="left:363px;top:588px;width:73px;height:1px;background:#808080;"></div>
<div style="left:435px;top:566px;width:1px;height:23px;background:#808080;"></div>
<span class="t" style="left:367.91px;top:572px;font-size:11px;font-weight:normal;color:#000;transform:scaleX(0.9867);transform-origin:0 0;">Detail osoby</span>
<div style="left:453px;top:565px;width:75px;height:25px;background:#d4d0c8;"></div>
<div style="left:453px;top:565px;width:74px;height:1px;background:#ffffff;"></div>
<div style="left:453px;top:565px;width:1px;height:24px;background:#ffffff;"></div>
<div style="left:453px;top:589px;width:75px;height:1px;background:#404040;"></div>
<div style="left:527px;top:565px;width:1px;height:25px;background:#404040;"></div>
<div style="left:454px;top:566px;width:72px;height:1px;background:#d4d0c8;"></div>
<div style="left:454px;top:566px;width:1px;height:22px;background:#d4d0c8;"></div>
<div style="left:454px;top:588px;width:73px;height:1px;background:#808080;"></div>
<div style="left:526px;top:566px;width:1px;height:23px;background:#808080;"></div>
<span class="t" style="left:478.00px;top:572px;font-size:11px;font-weight:normal;color:#000;transform:scaleX(1.0000);transform-origin:0 0;">Role</span>
<span class="t" style="left:600.40px;top:410px;font-size:11px;font-weight:normal;color:#000;transform:scaleX(0.9857);transform-origin:0 0;">Jméno:</span>
<span class="t" style="left:604.79px;top:424px;font-size:11px;font-weight:normal;color:#000080;transform:scaleX(1.0055);transform-origin:0 0;">Marta Tenčlová</span>
<span class="t" style="left:599.39px;top:442px;font-size:11px;font-weight:normal;color:#000;transform:scaleX(1.0107);transform-origin:0 0;">Login:</span>
<span class="t" style="left:604.87px;top:456px;font-size:11px;font-weight:normal;color:#000080;transform:scaleX(0.9324);transform-origin:0 0;">MARTA</span>
<span class="t" style="left:599.45px;top:474px;font-size:11px;font-weight:normal;color:#000;transform:scaleX(0.9485);transform-origin:0 0;">E-mail:</span>
<span class="t" style="left:605.80px;top:488px;font-size:11px;font-weight:normal;color:#000080;transform:scaleX(0.9856);transform-origin:0 0;">tenclov@erudio.cz</span>
<span class="t" style="left:600.40px;top:506px;font-size:11px;font-weight:normal;color:#000;transform:scaleX(1.0053);transform-origin:0 0;">Telefon:</span>
<span class="t" style="left:599.37px;top:538px;font-size:11px;font-weight:normal;color:#000;transform:scaleX(1.0324);transform-origin:0 0;">Fakulta:</span>
<span class="t" style="left:606.01px;top:552px;font-size:11px;font-weight:normal;color:#000080;transform:scaleX(0.9902);transform-origin:0 0;">MFF (11320)</span>
<div style="left:4px;top:605px;width:792px;height:41px;background:#d4d0c8;"></div>
<div style="left:4px;top:605px;width:791px;height:1px;background:#ffffff;"></div>
<div style="left:4px;top:605px;width:1px;height:40px;background:#ffffff;"></div>
<div style="left:4px;top:645px;width:792px;height:1px;background:#808080;"></div>
<div style="left:795px;top:605px;width:1px;height:41px;background:#808080;"></div>
<div style="left:16px;top:619px;width:13px;height:13px;background:#fff;"></div>
<div style="left:16px;top:619px;width:12px;height:1px;background:#808080;"></div>
<div style="left:16px;top:619px;width:1px;height:12px;background:#808080;"></div>
<div style="left:16px;top:631px;width:13px;height:1px;background:#ffffff;"></div>
<div style="left:28px;top:619px;width:1px;height:13px;background:#ffffff;"></div>
<div style="left:17px;top:620px;width:10px;height:1px;background:#404040;"></div>
<div style="left:17px;top:620px;width:1px;height:10px;background:#404040;"></div>
<div style="left:17px;top:630px;width:11px;height:1px;background:#d4d0c8;"></div>
<div style="left:27px;top:620px;width:1px;height:11px;background:#d4d0c8;"></div>
<span class="t" style="left:32.72px;top:619px;font-size:11px;font-weight:normal;color:#000;transform:scaleX(0.9753);transform-origin:0 0;">Prohodit osoby</span>
<div style="left:191px;top:609px;width:97px;height:33px;background:#000;"></div>
<div style="left:192px;top:610px;width:95px;height:31px;background:#d4d0c8;"></div>
<div style="left:192px;top:610px;width:94px;height:1px;background:#ffffff;"></div>
<div style="left:192px;top:610px;width:1px;height:30px;background:#ffffff;"></div>
<div style="left:192px;top:640px;width:95px;height:1px;background:#404040;"></div>
<div style="left:286px;top:610px;width:1px;height:31px;background:#404040;"></div>
<div style="left:193px;top:611px;width:92px;height:1px;background:#d4d0c8;"></div>
<div style="left:193px;top:611px;width:1px;height:28px;background:#d4d0c8;"></div>
<div style="left:193px;top:639px;width:93px;height:1px;background:#808080;"></div>
<div style="left:285px;top:611px;width:1px;height:29px;background:#808080;"></div>
<div style="left:195px;top:613px;width:89px;height:25px;border:1px dotted #000"></div>
<svg style="left:200px;top:614px" width="30" height="24" viewBox="200 614 30 24"><path d="M204.5 625L210 630.5L220 619.5L222 621.5L210 634L204.5 628.5z" fill="#009000"/><path d="M205 628L210 633.3L221.5 621" stroke="#000080" stroke-width="1.3" fill="none"/><path d="M205 625.3L210 630.3L219.8 619" stroke="#00ff00" stroke-width="1.3" fill="none"/></svg>
<span class="t" style="left:223.84px;top:620px;font-size:11px;font-weight:normal;color:#000;transform:scaleX(0.9640);transform-origin:0 0;">Schváleno</span>
<div style="left:311px;top:609px;width:100px;height:33px;background:#d4d0c8;"></div>
<div style="left:311px;top:609px;width:99px;height:1px;background:#ffffff;"></div>
<div style="left:311px;top:609px;width:1px;height:32px;background:#ffffff;"></div>
<div style="left:311px;top:641px;width:100px;height:1px;background:#404040;"></div>
<div style="left:410px;top:609px;width:1px;height:33px;background:#404040;"></div>
<div style="left:312px;top:610px;width:97px;height:1px;background:#d4d0c8;"></div>
<div style="left:312px;top:610px;width:1px;height:30px;background:#d4d0c8;"></div>
<div style="left:312px;top:640px;width:98px;height:1px;background:#808080;"></div>
<div style="left:409px;top:610px;width:1px;height:31px;background:#808080;"></div>
<svg style="left:322px;top:614px" width="24" height="24" viewBox="322 614 24 24"><path d="M331 621.5L339 631.5M329.5 632L340 619.5" stroke="#800000" stroke-width="3.2" fill="none"/><path d="M329.8 621.5L337.5 631M328.5 631L339 618.8" stroke="#ff0000" stroke-width="1" fill="none" opacity="0.9"/><path d="M331.5 623L339 631.5M330.5 632.5L340.5 620.5" stroke="#800000" stroke-width="2" fill="none"/></svg>
<span class="t" style="left:346.30px;top:620px;font-size:11px;font-weight:normal;color:#000;transform:scaleX(0.9796);transform-origin:0 0;">Zamítnuto</span>
<div style="left:701px;top:609px;width:89px;height:33px;background:#d4d0c8;"></div>
<div style="left:701px;top:609px;width:88px;height:1px;background:#ffffff;"></div>
<div style="left:701px;top:609px;width:1px;height:32px;background:#ffffff;"></div>
<div style="left:701px;top:641px;width:89px;height:1px;background:#404040;"></div>
<div style="left:789px;top:609px;width:1px;height:33px;background:#404040;"></div>
<div style="left:702px;top:610px;width:86px;height:1px;background:#d4d0c8;"></div>
<div style="left:702px;top:610px;width:1px;height:30px;background:#d4d0c8;"></div>
<div style="left:702px;top:640px;width:87px;height:1px;background:#808080;"></div>
<div style="left:788px;top:610px;width:1px;height:31px;background:#808080;"></div>
<svg style="left:724px;top:617px" width="19" height="18" shape-rendering="crispEdges"><rect x="6" y="0" width="6" height="1" fill="#000"/><rect x="6" y="1" width="1" height="1" fill="#000"/><rect x="7" y="1" width="4" height="1" fill="#00ff00"/><rect x="11" y="1" width="1" height="1" fill="#000"/><rect x="6" y="2" width="6" height="1" fill="#000"/><rect x="4" y="4" width="10" height="1" fill="#000080"/><rect x="4" y="5" width="1" height="1" fill="#000080"/><rect x="5" y="5" width="1" height="1" fill="#ff00ff"/><rect x="6" y="5" width="1" height="1" fill="#800080"/><rect x="7" y="5" width="1" height="1" fill="#ff00ff"/><rect x="8" y="5" width="1" height="1" fill="#000"/><rect x="9" y="5" width="1" height="1" fill="#00ffff"/><rect x="10" y="5" width="1" height="1" fill="#ffffff"/><rect x="11" y="5" width="1" height="1" fill="#00ffff"/><rect x="12" y="5" width="1" height="1" fill="#ffffff"/><rect x="13" y="5" width="1" height="1" fill="#000080"/><rect x="4" y="6" width="1" height="1" fill="#000080"/><rect x="5" y="6" width="1" height="1" fill="#800080"/><rect x="6" y="6" width="1" height="1" fill="#ff00ff"/><rect x="7" y="6" width="1" height="1" fill="#800080"/><rect x="8" y="6" width="1" height="1" fill="#000"/><rect x="9" y="6" width="1" height="1" fill="#ffffff"/><rect x="10" y="6" width="1" height="1" fill="#00ffff"/><rect x="11" y="6" width="1" height="1" fill="#ffffff"/><rect x="12" y="6" width="1" height="1" fill="#00ffff"/><rect x="13" y="6" width="1" height="1" fill="#000080"/><rect x="4" y="7" width="1" height="1" fill="#000080"/><rect x="5" y="7" width="1" height="1" fill="#ff00ff"/><rect x="6" y="7" width="1" height="1" fill="#800080"/><rect x="7" y="7" width="1" height="1" fill="#ff00ff"/><rect x="8" y="7" width="1" height="1" fill="#000"/><rect x="9" y="7" width="1" height="1" fill="#00ffff"/><rect x="10" y="7" width="1" height="1" fill="#ffffff"/><rect x="11" y="7" width="1" height="1" fill="#00ffff"/><rect x="12" y="7" width="1" height="1" fill="#ffffff"/><rect x="13" y="7" width="1" height="1" fill="#000080"/><rect x="4" y="8" width="1" height="1" fill="#000080"/><rect x="5" y="8" width="1" height="1" fill="#800080"/><rect x="6" y="8" width="1" height="1" fill="#ff00ff"/><rect x="7" y="8" width="1" height="1" fill="#800080"/><rect x="8" y="8" width="1" height="1" fill="#000"/><rect x="9" y="8" width="4" height="1" fill="#ffffff"/><rect x="13" y="8" width="1" height="1" fill="#000080"/><rect x="4" y="9" width="1" height="1" fill="#000080"/><rect x="5" y="9" width="1" height="1" fill="#ff00ff"/><rect x="6" y="9" width="1" height="1" fill="#800080"/><rect x="7" y="9" width="1" height="1" fill="#ff00ff"/><rect x="8" y="9" width="1" height="1" fill="#000"/><rect x="9" y="9" width="1" height="1" fill="#00ffff"/><rect x="10" y="9" width="1" height="1" fill="#ffffff"/><rect x="11" y="9" width="1" height="1" fill="#00ffff"/><rect x="12" y="9" width="1" height="1" fill="#ffffff"/><rect x="13" y="9" width="1" height="1" fill="#000080"/><rect x="4" y="10" width="1" height="1" fill="#000080"/><rect x="5" y="10" width="1" height="1" fill="#800080"/><rect x="6" y="10" width="1" height="1" fill="#ff00ff"/><rect x="7" y="10" width="1" height="1" fill="#800080"/><rect x="8" y="10" width="1" height="1" fill="#000"/><rect x="9" y="10" width="4" height="1" fill="#ffffff"/><rect x="13" y="10" width="1" height="1" fill="#000080"/><rect x="4" y="11" width="1" height="1" fill="#000080"/><rect x="5" y="11" width="1" height="1" fill="#ff00ff"/><rect x="6" y="11" width="1" height="1" fill="#800080"/><rect x="7" y="11" width="1" height="1" fill="#ff00ff"/><rect x="8" y="11" width="1" height="1" fill="#000"/><rect x="9" y="11" width="1" height="1" fill="#00ffff"/><rect x="10" y="11" width="1" height="1" fill="#ffffff"/><rect x="11" y="11" width="1" height="1" fill="#00ffff"/><rect x="12" y="11" width="1" height="1" fill="#ffffff"/><rect x="13" y="11" width="1" height="1" fill="#000080"/><rect x="4" y="12" width="1" height="1" fill="#000080"/><rect x="5" y="12" width="1" height="1" fill="#800080"/><rect x="6" y="12" width="1" height="1" fill="#ff00ff"/><rect x="7" y="12" width="1" height="1" fill="#800080"/><rect x="8" y="12" width="1" height="1" fill="#000"/><rect x="9" y="12" width="4" height="1" fill="#ffffff"/><rect x="13" y="12" width="1" height="1" fill="#000080"/><rect x="4" y="13" width="1" height="1" fill="#000080"/><rect x="5" y="13" width="1" height="1" fill="#ff00ff"/><rect x="6" y="13" width="1" height="1" fill="#800080"/><rect x="7" y="13" width="1" height="1" fill="#ff00ff"/><rect x="8" y="13" width="1" height="1" fill="#000"/><rect x="9" y="13" width="4" height="1" fill="#ffffff"/><rect x="13" y="13" width="1" height="1" fill="#000080"/><rect x="4" y="14" width="1" height="1" fill="#000080"/><rect x="5" y="14" width="1" height="1" fill="#800080"/><rect x="6" y="14" width="1" height="1" fill="#ff00ff"/><rect x="7" y="14" width="2" height="1" fill="#000"/><rect x="9" y="14" width="4" height="1" fill="#ffffff"/><rect x="13" y="14" width="1" height="1" fill="#000080"/><rect x="4" y="15" width="1" height="1" fill="#000080"/><rect x="5" y="15" width="1" height="1" fill="#ff00ff"/><rect x="6" y="15" width="2" height="1" fill="#000"/><rect x="8" y="15" width="1" height="1" fill="#808080"/><rect x="9" y="15" width="4" height="1" fill="#ffffff"/><rect x="13" y="15" width="1" height="1" fill="#000080"/><rect x="0" y="16" width="5" height="1" fill="#000080"/><rect x="5" y="16" width="2" height="1" fill="#000"/><rect x="7" y="16" width="3" height="1" fill="#808080"/><rect x="10" y="16" width="3" height="1" fill="#ffffff"/><rect x="13" y="16" width="5" height="1" fill="#000080"/><rect x="6" y="17" width="5" height="1" fill="#808080"/></svg>
<span class="t" style="left:745.80px;top:620px;font-size:11px;font-weight:normal;color:#000;transform:scaleX(0.8783);transform-origin:0 0;"><u>Z</u>miz</span>
</body></html>
